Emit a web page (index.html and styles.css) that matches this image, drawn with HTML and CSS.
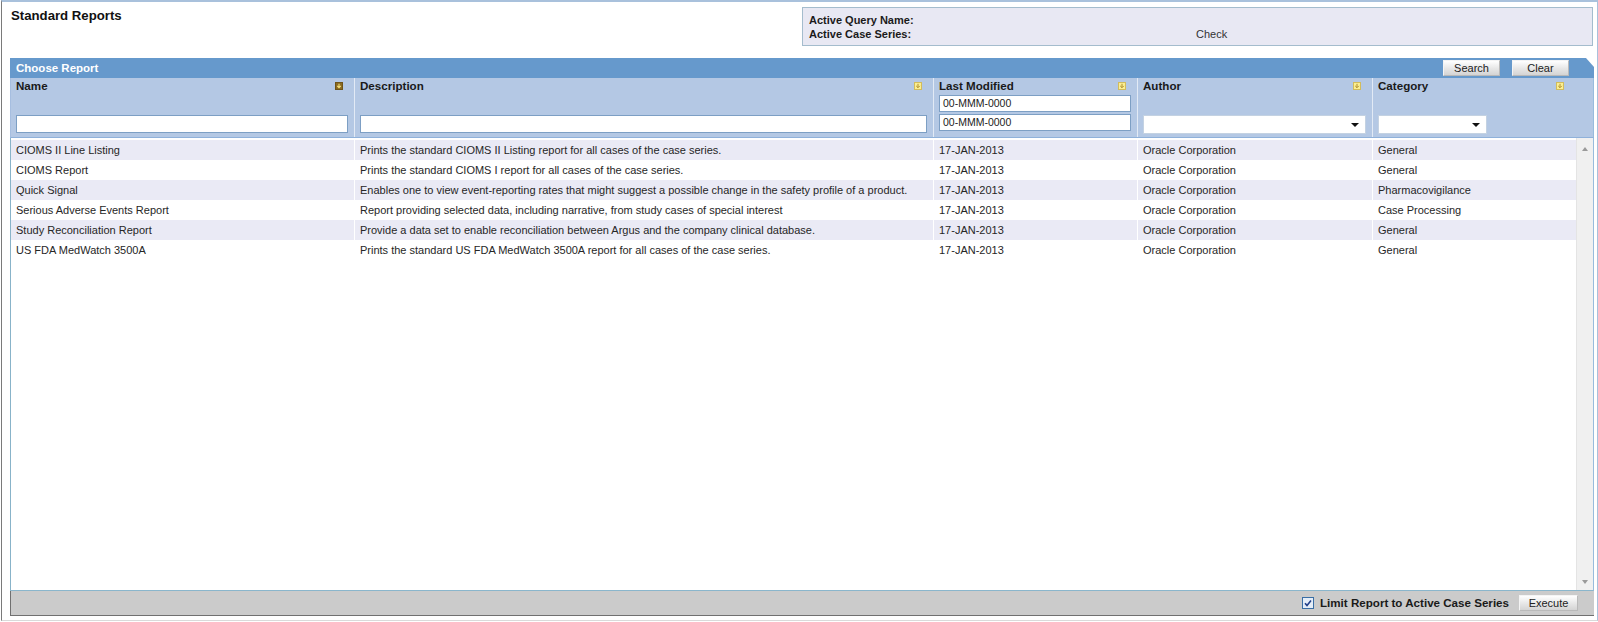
FILE: index.html
```html
<!DOCTYPE html>
<html>
<head>
<meta charset="utf-8">
<title>Standard Reports</title>
<link rel="stylesheet" href="styles.css">
</head>
<body>
<div class="page">
  <div class="top">
    <h1 class="title">Standard Reports</h1>
    <div class="query">
      <div class="qrow"><span class="qlabel">Active Query Name:</span><span class="qval"></span></div>
      <div class="qrow"><span class="qlabel">Active Case Series:</span><span class="qval">Check</span></div>
    </div>
  </div>

  <div class="panel">
    <div class="bar">
      <span class="bar-title">Choose Report</span>
      <div class="btns">
        <button class="btn">Search</button>
        <button class="btn">Clear</button>
      </div>
    </div>

    <div class="head">
      <div class="hcell">
        <div class="hlabel"><span>Name</span><svg class="sort" width="8" height="8" viewBox="0 0 8 8"><rect x="0.5" y="0.5" width="7" height="7" fill="#8a6a22" stroke="#6f5418"/><path d="M4 1.8v3.8M2.2 3.9L4 5.7 5.8 3.9" fill="none" stroke="#f7e27a" stroke-width="1.1"/></svg></div>
        <div class="field name-field"></div>
      </div>
      <div class="hcell">
        <div class="hlabel"><span>Description</span><svg class="sort" width="8" height="8" viewBox="0 0 8 8"><rect x="0.5" y="0.5" width="7" height="7" fill="#fbef92" stroke="#d2bc5c"/><path d="M4 1.8v3.8M2.2 3.9L4 5.7 5.8 3.9" fill="none" stroke="#b09030" stroke-width="1"/></svg></div>
        <div class="field name-field"></div>
      </div>
      <div class="hcell">
        <div class="hlabel"><span>Last Modified</span><svg class="sort" width="8" height="8" viewBox="0 0 8 8"><rect x="0.5" y="0.5" width="7" height="7" fill="#fbef92" stroke="#d2bc5c"/><path d="M4 1.8v3.8M2.2 3.9L4 5.7 5.8 3.9" fill="none" stroke="#b09030" stroke-width="1"/></svg></div>
        <div class="field date-field">00-MMM-0000</div>
        <div class="field date-field second">00-MMM-0000</div>
      </div>
      <div class="hcell">
        <div class="hlabel"><span>Author</span><svg class="sort" width="8" height="8" viewBox="0 0 8 8"><rect x="0.5" y="0.5" width="7" height="7" fill="#fbef92" stroke="#d2bc5c"/><path d="M4 1.8v3.8M2.2 3.9L4 5.7 5.8 3.9" fill="none" stroke="#b09030" stroke-width="1"/></svg></div>
        <div class="field select"><span class="caret"></span></div>
      </div>
      <div class="hcell">
        <div class="hlabel"><span>Category</span><svg class="sort" width="8" height="8" viewBox="0 0 8 8"><rect x="0.5" y="0.5" width="7" height="7" fill="#fbef92" stroke="#d2bc5c"/><path d="M4 1.8v3.8M2.2 3.9L4 5.7 5.8 3.9" fill="none" stroke="#b09030" stroke-width="1"/></svg></div>
        <div class="field select cat-select"><span class="caret"></span></div>
      </div>
      <div class="hspacer"></div>
    </div>

    <div class="body">
      <div class="rows">
        <div class="row alt">
          <div class="cell">CIOMS II Line Listing</div>
          <div class="cell">Prints the standard CIOMS II Listing report for all cases of the case series.</div>
          <div class="cell">17-JAN-2013</div>
          <div class="cell">Oracle Corporation</div>
          <div class="cell">General</div>
        </div>
        <div class="row">
          <div class="cell">CIOMS Report</div>
          <div class="cell">Prints the standard CIOMS I report for all cases of the case series.</div>
          <div class="cell">17-JAN-2013</div>
          <div class="cell">Oracle Corporation</div>
          <div class="cell">General</div>
        </div>
        <div class="row alt">
          <div class="cell">Quick Signal</div>
          <div class="cell">Enables one to view event-reporting rates that might suggest a possible change in the safety profile of a product.</div>
          <div class="cell">17-JAN-2013</div>
          <div class="cell">Oracle Corporation</div>
          <div class="cell">Pharmacovigilance</div>
        </div>
        <div class="row">
          <div class="cell">Serious Adverse Events Report</div>
          <div class="cell">Report providing selected data, including narrative, from study cases of special interest</div>
          <div class="cell">17-JAN-2013</div>
          <div class="cell">Oracle Corporation</div>
          <div class="cell">Case Processing</div>
        </div>
        <div class="row alt">
          <div class="cell">Study Reconciliation Report</div>
          <div class="cell">Provide a data set to enable reconciliation between Argus and the company clinical database.</div>
          <div class="cell">17-JAN-2013</div>
          <div class="cell">Oracle Corporation</div>
          <div class="cell">General</div>
        </div>
        <div class="row">
          <div class="cell">US FDA MedWatch 3500A</div>
          <div class="cell">Prints the standard US FDA MedWatch 3500A report for all cases of the case series.</div>
          <div class="cell">17-JAN-2013</div>
          <div class="cell">Oracle Corporation</div>
          <div class="cell">General</div>
        </div>
      </div>
      <div class="scroll">
        <span class="arrow up"></span>
        <span class="arrow down"></span>
      </div>
    </div>

    <div class="foot">
      <svg class="check" width="12" height="12" viewBox="0 0 12 12"><rect x="0.5" y="0.5" width="11" height="11" fill="#e4edf8" stroke="#3a6ea5"/><path d="M3 6.2l2 2.2 4-5" fill="none" stroke="#23408a" stroke-width="1.6"/></svg>
      <span class="foot-label">Limit Report to Active Case Series</span>
      <button class="btn exec">Execute</button>
    </div>
  </div>
</div>
</body>
</html>
```

FILE: styles.css
```css
* { box-sizing: border-box; }
html, body { margin: 0; padding: 0; background: #ffffff; }
body { font-family: "Liberation Sans", Arial, sans-serif; color: #1e1e1e; }

.page {
  margin-left: 1px;
  height: 621px;
  border-top: 2px solid #a9c1dc;
  border-left: 1px solid #7a7a7a;
  border-right: 1px solid #a9c1dc;
  border-bottom: 1px solid #dadada;
}

.top {
  display: flex;
  height: 56px;
}
.title {
  margin: 6px 0 0 9px;
  font-size: 13.2px;
  line-height: 15px;
  font-weight: bold;
  color: #111;
}
.query {
  margin: 5px 4px 0 auto;
  width: 791px;
  height: 39px;
  background: #e8e8f3;
  border: 1px solid #a4bccd;
  padding: 5px 0 0 6px;
}
.qrow { display: flex; font-size: 11px; line-height: 14px; }
.qlabel { width: 387px; font-weight: bold; color: #1a1a1a; }
.qval { color: #333; }

.panel {
  margin: 0 3px 0 8px;
}
.bar {
  height: 20px;
  background: #6699cc;
  display: flex;
  align-items: flex-start;
  justify-content: space-between;
  clip-path: polygon(0 0, calc(100% - 8px) 0, 100% 9px, 100% 100%, 0 100%);
}
.bar-title {
  color: #fff;
  font-weight: bold;
  font-size: 11.5px;
  line-height: 20px;
  padding-left: 6px;
}
.btns { display: flex; gap: 12px; margin: 2px 25px 0 0; }
.btn {
  width: 57px;
  height: 16px;
  padding: 0;
  border: 1px solid #f4f4f4;
  border-bottom-color: #b9b9b9;
  border-right-color: #b9b9b9;
  background: linear-gradient(#ffffff, #e6e6e6 55%, #d4d4d4);
  font-family: "Liberation Sans", Arial, sans-serif;
  font-size: 11px;
  line-height: 14px;
  color: #222;
  text-align: center;
}

.head {
  display: grid;
  grid-template-columns: 343px 579px 204px 235px 203px 1fr;
  height: 60px;
  background: #b4c8e4;
  border-left: 1px solid #a6bee0;
  border-right: 1px solid #98bbdc;
  border-bottom: 1px solid #8fb1da;
}
.hcell {
  padding: 1px 6px 0 5px;
  display: flex;
  flex-direction: column;
}
.hcell + .hcell { border-left: 1px solid #e2eaf5; }
.hlabel {
  height: 16px;
  display: flex;
  justify-content: space-between;
  align-items: flex-start;
  font-size: 11.6px;
  font-weight: bold;
  line-height: 13px;
  color: #1a1a1a;
}
.sort { margin: 3px 5px 0 0; flex: none; }

.field {
  background: #fff;
  border: 1px solid #7d9fc4;
  font-size: 10.5px;
  line-height: 15px;
  padding-left: 3px;
  color: #222;
}
.name-field { height: 18px; margin-top: 20px; }
.date-field { height: 17px; margin-top: 0; }
.date-field.second { margin-top: 2px; }
.select {
  height: 19px;
  margin-top: 20px;
  border-color: #c4d2e2;
  position: relative;
}
.cat-select { width: 109px; }
.caret {
  position: absolute;
  right: 6px;
  top: 7px;
  width: 0; height: 0;
  border-left: 4px solid transparent;
  border-right: 4px solid transparent;
  border-top: 4px solid #111;
}

.body {
  display: flex;
  height: 453px;
  border-left: 1px solid #88b3c9;
  border-right: 1px solid #98bbdc;
  border-bottom: 1px solid #8ab6cc;
}
.rows { flex: 1; padding-top: 2px; }
.row {
  display: grid;
  grid-template-columns: 343px 579px 204px 235px 1fr;
  height: 20px;
  font-size: 11px;
  line-height: 21px;
  color: #262626;
}
.row.alt { background: #eaeaf5; }
.cell { padding-left: 5px; white-space: nowrap; overflow: hidden; }
.cell + .cell { border-left: 1px solid #ffffff; }

.scroll {
  width: 17px;
  background: #f0f0f0;
  border-left: 1px solid #e4e4e4;
  display: flex;
  flex-direction: column;
  justify-content: space-between;
  align-items: center;
  padding: 9px 0 6px;
}
.arrow { width: 0; height: 0; border-left: 3.5px solid transparent; border-right: 3.5px solid transparent; }
.arrow.up { border-bottom: 4px solid #9a9a9a; }
.arrow.down { border-top: 4px solid #9a9a9a; }

.foot {
  height: 25px;
  background: #cbcbcb;
  border-left: 1px solid #707070;
  border-bottom: 1px solid #707070;
  display: flex;
  justify-content: flex-end;
  align-items: center;
  padding: 0 16px 1px 0;
}
.check { margin: 0 6px 0 0; }
.foot-label {
  font-size: 11.6px;
  font-weight: bold;
  line-height: 16px;
  color: #1a1a1a;
  margin-right: 10px;
}
.exec { width: 59px; height: 16px; }
```
